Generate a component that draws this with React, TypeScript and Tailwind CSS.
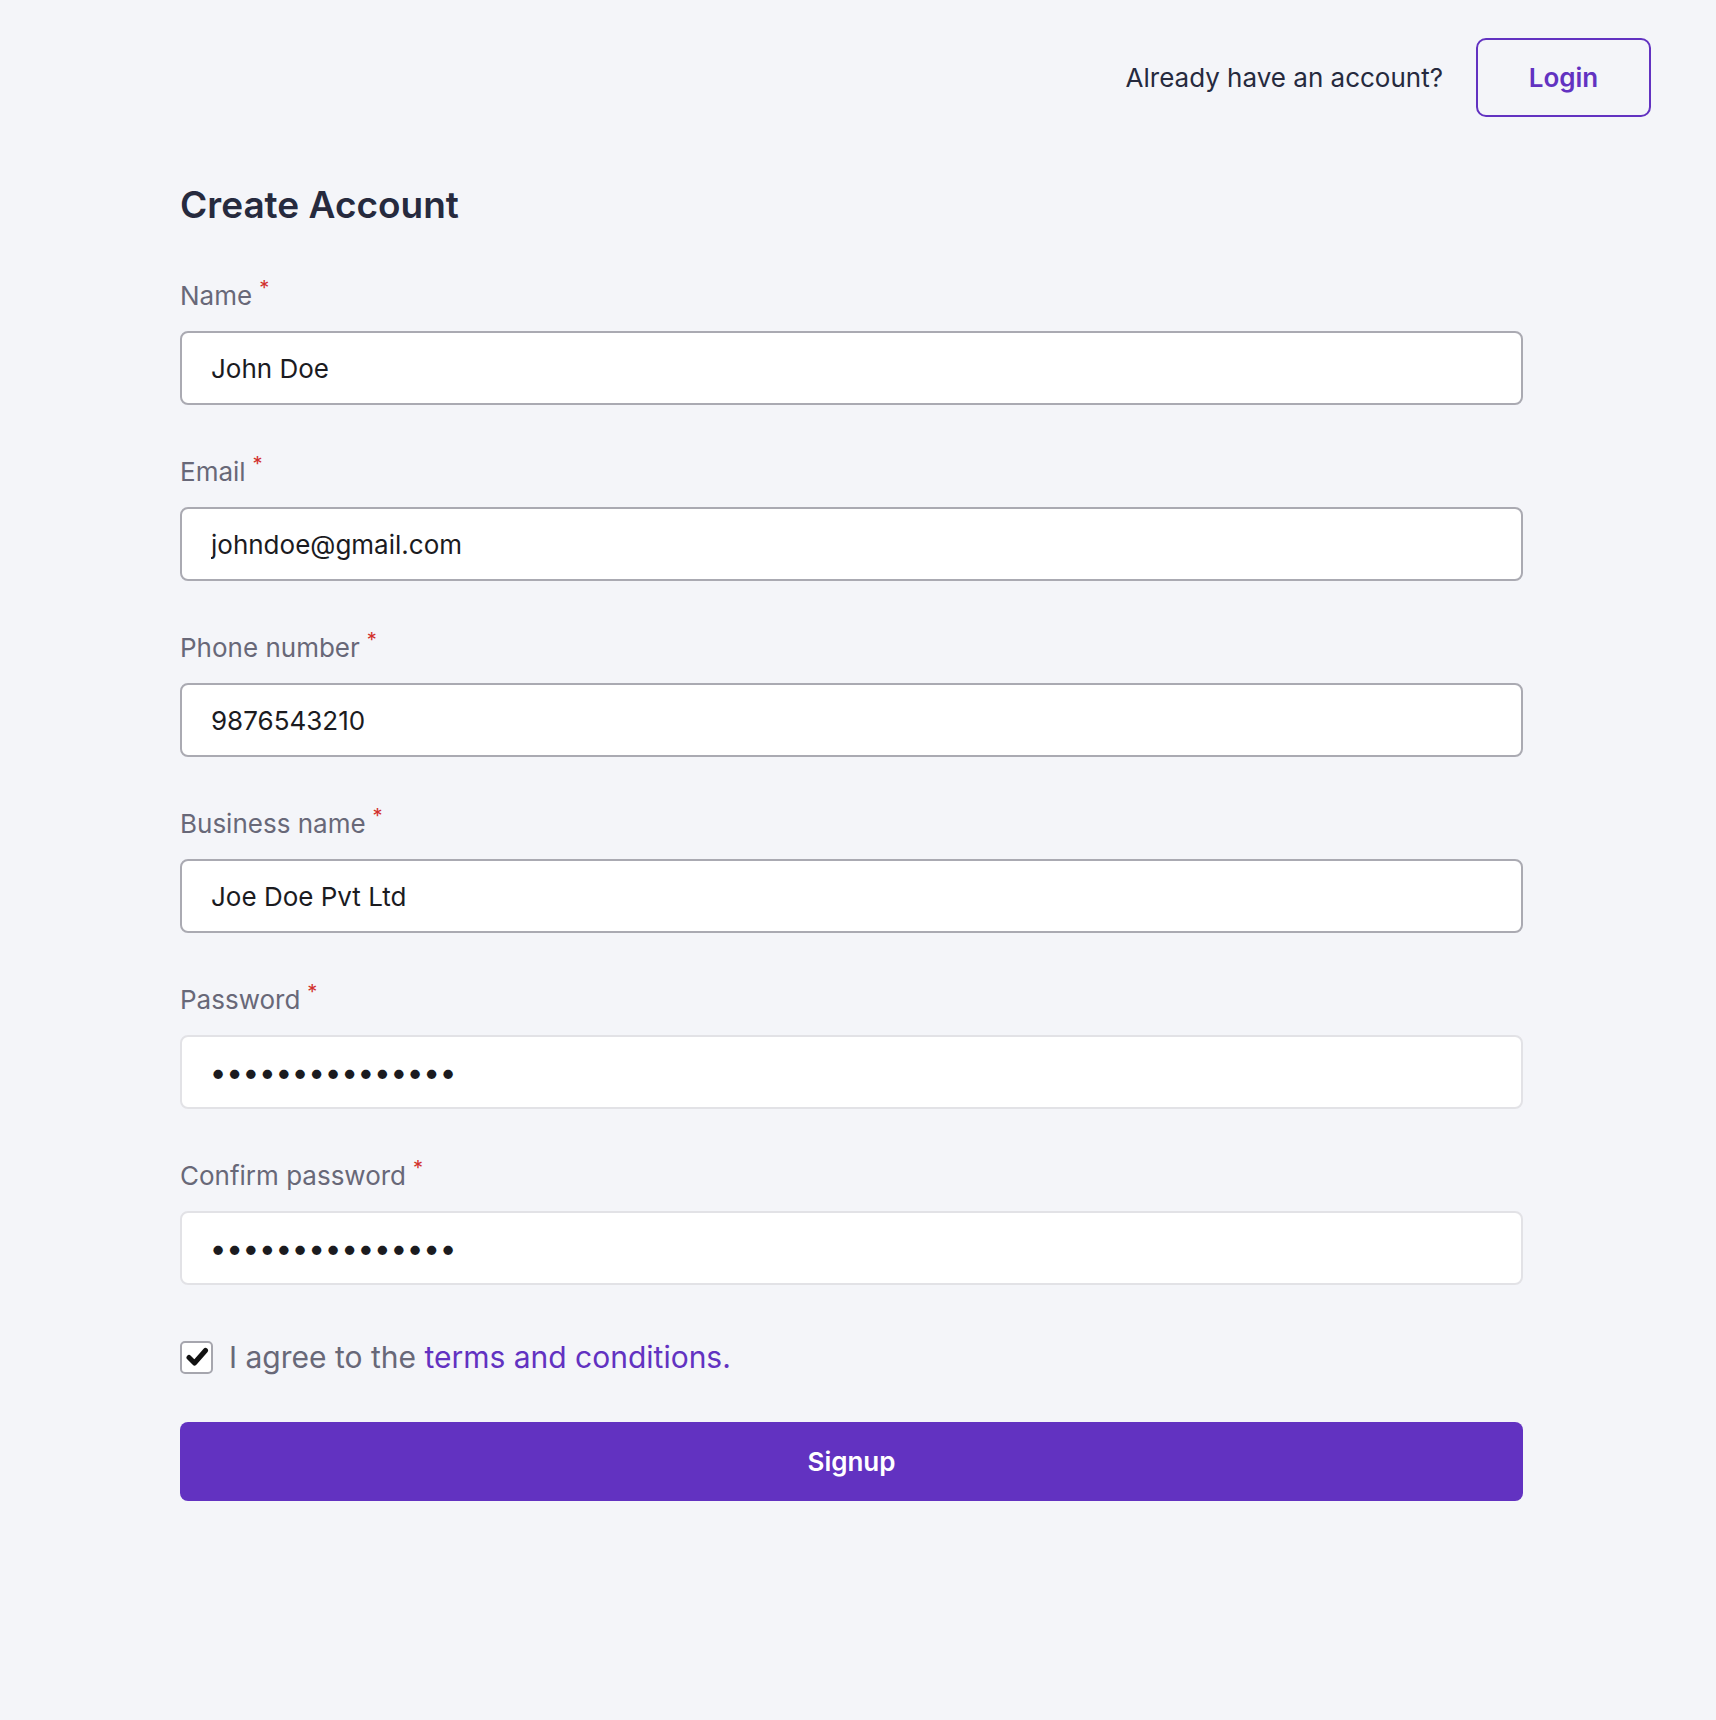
import React from "react";

const font = { fontFamily: "Inter, 'Noto Sans', sans-serif" };

function Field({ label, value, type = "text", light = false }: { label: string; value: string; type?: string; light?: boolean }) {
  const isPw = type === "password";
  return (
    <div className="flex flex-col">
      <div className="h-[32px] flex items-center text-[26px] text-[#686878]">
        <span>{label}</span>
        <span className="text-[#d2302c] text-[20px] self-start ml-[7px] -mt-[6px]">*</span>
      </div>
      <input
        readOnly
        type={type}
        value={value}
        className={`mt-[20px] h-[74px] w-full rounded-[8px] bg-white px-[29px] ${isPw ? "text-[30px] font-bold tracking-[2.2px]" : "text-[26px]"} text-[#1b1b1f] outline-none border-2 ${light ? "border-[#e2e2e6]" : "border-[#aaaab2]"}`}
        style={font}
      />
    </div>
  );
}

export default function App() {
  return (
    <div className="min-h-screen w-full bg-[#f4f5f9]" style={font}>
      <div className="flex items-center justify-end pt-[38px] pr-[65px]">
        <span className="text-[26px] text-[#262a3e] mr-[33px]">Already have an account?</span>
        <button className="h-[79px] w-[175px] rounded-[10px] border-2 border-[#6232c1] text-[26px] font-semibold text-[#6232c1]">
          Login
        </button>
      </div>
      <div className="ml-[180px] w-[1343px] flex flex-col">
        <h1 className="mt-[68px] h-[40px] flex items-center text-[37px] font-semibold text-[#262a3e]">Create Account</h1>
        <div className="mt-[54px] flex flex-col gap-[50px]">
          <Field label="Name" value="John Doe" />
          <Field label="Email" value="johndoe@gmail.com" />
          <Field label="Phone number" value="9876543210" />
          <Field label="Business name" value="Joe Doe Pvt Ltd" />
          <Field label="Password" value="mypassword12345" type="password" light />
          <Field label="Confirm password" value="mypassword12345" type="password" light />
        </div>
        <div className="mt-[55px] flex items-center h-[34px]">
          <div className="w-[33px] h-[33px] rounded-[5px] border-2 border-[#a6a6ae] bg-white flex items-center justify-center">
            <svg viewBox="0 0 24 24" className="w-[24px] h-[24px]">
              <path d="M4 12.5 L9.5 18 L20.5 5.5" fill="none" stroke="#111" strokeWidth="5" strokeLinecap="round" strokeLinejoin="round" />
            </svg>
          </div>
          <span className="ml-[16px] text-[30px] text-[#686878]">
            I agree to the <span className="text-[#6232c1]">terms and conditions.</span>
          </span>
        </div>
        <button className="mt-[48px] h-[79px] w-full rounded-[8px] bg-[#6232c1] text-white text-[26px] font-semibold">
          Signup
        </button>
      </div>
    </div>
  );
}
